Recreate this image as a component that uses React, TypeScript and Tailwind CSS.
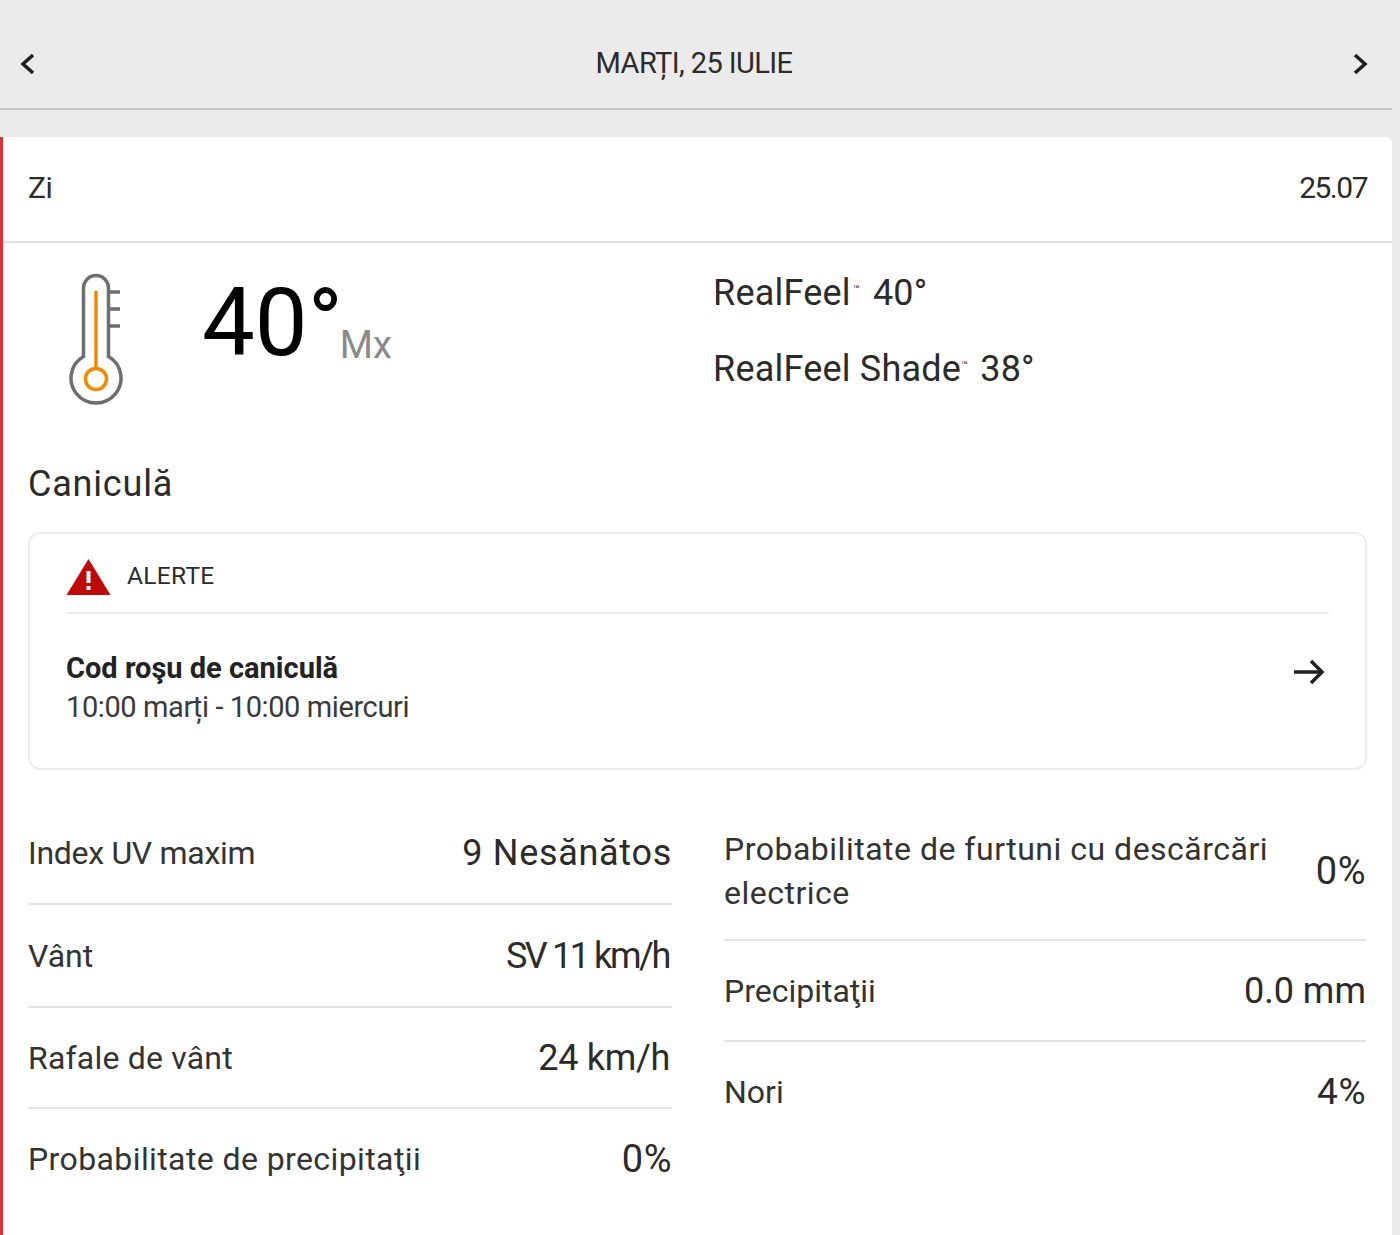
function Row({ h, label, value, labelCls, valueCls, last }: { h: string; label: string; value: string; labelCls: string; valueCls: string; last?: boolean }) {
  return (
    <div className={`${h} flex items-center justify-between ${last ? "" : "border-b-2 border-[#e2e2e2]"}`}>
      <span className={`text-[32px] leading-[44px] text-[#333] ${labelCls}`}>{label}</span>
      <span className={`leading-[44px] text-[#2b2b2b] ${valueCls}`}>{value}</span>
    </div>
  );
}

export default function App() {
  return (
    <div className="w-[1400px] h-[1235px] overflow-hidden bg-[#ebebeb] font-['Roboto',sans-serif] text-[#222]">
      <div className="mr-2 h-[110px] border-b-2 border-[#c4c4c4] flex items-center justify-between pl-[20px] pr-[24px] pt-[20px]">
        <svg width="16" height="24" viewBox="0 0 16 24" fill="none" stroke="#1f1f1f" strokeWidth="3.500"><path d="M13 3 L3 12 L13 21" /></svg>
        <span className="text-[29px] tracking-[-0.6px] text-[#2b2b2b]">MARȚI, 25 IULIE</span>
        <svg width="16" height="24" viewBox="0 0 16 24" fill="none" stroke="#1f1f1f" strokeWidth="3.500"><path d="M3 3 L13 12 L3 21" /></svg>
      </div>
      <div className="mt-[27px] mr-2 h-[1100px] bg-white border-l-[3px] border-[#e0303a] rounded-tr-[6px]">
        <div className="h-[106px] border-b-2 border-[#e2e2e2] flex items-center justify-between pl-[25px] pr-[25px] pb-[3px] text-[30px] text-[#2b2b2b]">
          <span className="tracking-[-0.5px]">Zi</span><span className="tracking-[-1.5px]">25.07</span>
        </div>
        <div className="flex pl-[25px] pr-[25px] h-[217px]">
          <div className="w-[685px] flex items-start">
            <svg className="ml-[41px] mt-[29px]" width="54" height="134" viewBox="0 0 54 134" fill="none">
              <path d="M14.500 84.400 V16 a12.500 12.500 0 0 1 25 0 V84.400 A25 25 0 1 1 14.500 84.400 Z" stroke="#6e6e6e" strokeWidth="3.500" />
              <path d="M39.500 20 H51 M39.500 37 H51 M39.500 54 H51" stroke="#6e6e6e" strokeWidth="3.500" />
              <path d="M27 19 V96" stroke="#f28a00" strokeWidth="3.500" />
              <circle cx="27" cy="107" r="10.500" stroke="#f28a00" strokeWidth="3.500" />
            </svg>
            <span className="ml-[79px] mt-[15px] text-[94px] leading-[130px] text-black">40°</span>
            <span className="-ml-[3px] mt-[72px] text-[38px] leading-[60px] text-[#8a8a8a]">Mx</span>
          </div>
          <div className="pt-[26px] text-[36px] leading-[48px] text-[#2b2b2b] tracking-[0.2px]">
            <div>RealFeel<sup className="relative -top-[12px] text-[11px] ml-[2px] mr-[4px]">™</sup> 40°</div>
            <div className="mt-[28px]">RealFeel Shade<sup className="relative -top-[12px] text-[11px] mr-[3px]">™</sup> 38°</div>
          </div>
        </div>
        <div className="pl-[25px] text-[36px] leading-[48px] text-[#2b2b2b] tracking-[0.8px]">Caniculă</div>
        <div className="ml-[25px] mr-[25px] mt-[24px] h-[238px] border-2 border-[#ececec] rounded-[12px] px-[36px]">
          <div className="h-[80px] border-b-2 border-[#ececec] flex items-center gap-[16px] pt-[7px]">
            <svg width="45" height="38" viewBox="0 0 45 38"><path d="M22.500 1 L44.500 37 H0.500 Z" fill="#bf0a0a" /><path d="M22.500 13 V25 M22.500 28 V32" stroke="white" strokeWidth="4" /></svg>
            <span className="text-[24.500px] tracking-[0.3px] text-[#2b2b2b]">ALERTE</span>
          </div>
          <div className="flex items-start justify-between mt-[34px]">
            <div>
              <div className="text-[29px] leading-[40px] font-bold text-[#222]">Cod roşu de caniculă</div>
              <div className="text-[29px] leading-[38px] text-[#3a3a3a] tracking-[-0.4px]">10:00 marți - 10:00 miercuri</div>
            </div>
            <svg className="mt-[9px] mr-[3px]" width="34" height="30" viewBox="0 0 34 30" fill="none" stroke="#222" strokeWidth="3.500"><path d="M2 15 H30 M19 4 L30 15 L19 26" /></svg>
          </div>
        </div>
        <div className="flex gap-[52px] ml-[25px] mr-[25px] mt-[33px]">
          <div className="w-[644px] flex flex-col">
            <Row h="h-[102px]" label="Index UV maxim" value="9 Nesănătos" labelCls="tracking-[-0.3px]" valueCls="text-[36px] tracking-[0.7px]" />
            <Row h="h-[103px]" label="Vânt" value="SV 11 km/h" labelCls="" valueCls="text-[36px] tracking-[-2.4px] mr-[3px]" />
            <Row h="h-[101px]" label="Rafale de vânt" value="24 km/h" labelCls="tracking-[0.2px]" valueCls="text-[36px] tracking-[-0.3px] mr-[2px]" />
            <Row h="h-[100px]" label="Probabilitate de precipitaţii" value="0%" labelCls="tracking-[0.4px]" valueCls="text-[38px] tracking-[0.5px]" last />
          </div>
          <div className="w-[642px] flex flex-col">
            <Row h="h-[138px]" label="Probabilitate de furtuni cu descărcări electrice" value="0%" labelCls="w-[560px] tracking-[0.5px]" valueCls="text-[38px] tracking-[0.5px]" />
            <Row h="h-[101px]" label="Precipitaţii" value="0.0 mm" labelCls="" valueCls="text-[36px]" />
            <Row h="h-[100px]" label="Nori" value="4%" labelCls="" valueCls="text-[37px] tracking-[0.5px]" last />
          </div>
        </div>
      </div>
    </div>
  );
}
